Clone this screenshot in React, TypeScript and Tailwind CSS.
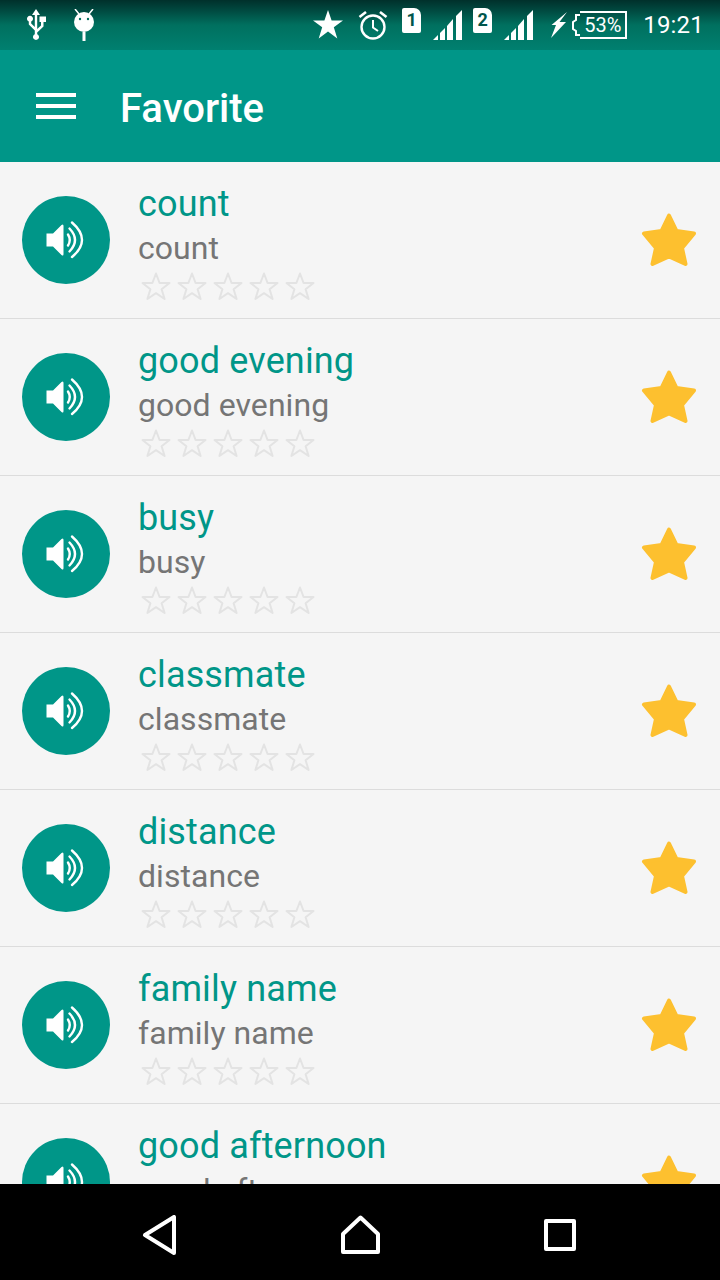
import React from "react";

const words = [
  "count",
  "good evening",
  "busy",
  "classmate",
  "distance",
  "family name",
  "good afternoon",
];

function Speaker() {
  return (
    <div className="flex items-center justify-center shrink-0 w-[88px] h-[88px] ml-[22px] rounded-full bg-[#009688]">
      <svg width="88" height="88" viewBox="0 0 88 88" fill="none">
        <path
          d="M24.5 37.5H31L39.5 29Q41.5 27.5 41.5 30V58Q41.5 60.5 39.5 59L31 50.5H24.5Z"
          fill="#fff"
        />
        <path d="M46 38.5Q49.5 44 46 49.5" stroke="#fff" strokeWidth="2.4" strokeLinecap="round" />
        <path d="M47.5 32.5Q58.5 44 47.5 55.5" stroke="#fff" strokeWidth="2.4" strokeLinecap="round" />
        <path d="M50 26.5Q70 44 50 61" stroke="#fff" strokeWidth="2.4" strokeLinecap="round" />
      </svg>
    </div>
  );
}

function SmallStar() {
  return (
    <svg width="36" height="30" viewBox="0 0 36 30" fill="none" className="shrink-0">
      <path
        d="M18 2.5L21.6 12H31.5L23.6 18.2L26.6 28L18 22.2L9.4 28L12.4 18.2L4.5 12H14.4Z"
        stroke="#e3e3e3"
        strokeWidth="2"
        strokeLinejoin="round"
      />
    </svg>
  );
}

function BigStar() {
  return (
    <svg width="56" height="54" viewBox="0 0 56 54" className="shrink-0 ml-auto mr-[23px]">
      <path
        d="M28 2.5L35.5 18L53 20.5L41 35L44.5 51L28 43.5L11.5 51L15 35L3 20.5L20.5 18Z"
        fill="#fdc02f"
        stroke="#fdc02f"
        strokeWidth="4"
        strokeLinejoin="round"
      />
    </svg>
  );
}

function Row({ word }: { word: string }) {
  return (
    <div className="flex items-center shrink-0 h-[157px] border-b border-[#dcdcdc]">
      <Speaker />
      <div className="flex flex-col ml-[28px] pt-[3px]">
        <p className="text-[36px] leading-[42px] tracking-[0.15px] text-[#009688]">{word}</p>
        <p className="text-[32px] leading-[38px] tracking-[0.05px] mt-[4px] text-[#757575]">{word}</p>
        <div className="flex mt-[4px]">
          <SmallStar />
          <SmallStar />
          <SmallStar />
          <SmallStar />
          <SmallStar />
        </div>
      </div>
      <BigStar />
    </div>
  );
}

function Signal({ className }: { className: string }) {
  return (
    <svg width="30" height="30" viewBox="0 0 30 30" fill="#fff" className={className}>
      <path d="M0 30L5 25V30Z" />
      <path d="M7 30V23L12 18V30Z" />
      <path d="M14 30V16L20 9V30Z" />
      <path d="M23 30V6L29 0V30Z" />
    </svg>
  );
}

function Sim({ label, className }: { label: string; className: string }) {
  return (
    <div
      className={`flex items-center justify-center w-[19px] h-[25px] rounded-tl-[2px] rounded-bl-[2px] rounded-br-[2px] rounded-tr-[7px] bg-white text-[#00564c] text-[18px] leading-none font-bold ${className}`}
    >
      {label}
    </div>
  );
}

function StatusBar() {
  return (
    <div className="flex items-center shrink-0 h-[50px] pb-[1px] bg-gradient-to-b from-[#00302b] via-[#00705f] to-[#008070] text-white">
      <svg width="20" height="31" viewBox="0 0 20 31" fill="#fff" className="ml-[26px]">
        <path d="M10 0L14 6H11.2V20L15 16.5V13H13.5V7.5H20V13H17.5V17.5L11.2 23.5V25.2A3 3 0 1 1 8.8 25.2V21.5L2.8 15.5V12.5A3 3 0 1 1 5.2 12.5V14.5L8.8 18V6H6Z" />
      </svg>
      <svg width="22" height="32" viewBox="0 0 22 32" fill="#fff" className="ml-[27px]">
        <circle cx="11" cy="13" r="10" />
        <path d="M2 0L6 5M20 0L16 5" stroke="#fff" strokeWidth="1.5" />
        <rect x="9.5" y="23" width="3" height="9" />
        <circle cx="7" cy="10" r="1.2" fill="#00705f" />
        <circle cx="15" cy="10" r="1.2" fill="#00705f" />
      </svg>
      <svg width="30" height="29" viewBox="0 0 30 29" fill="#fff" className="ml-auto">
        <path d="M15 0L18.6 10.5H30L20.8 17.2L24.3 28.5L15 21.5L5.7 28.5L9.2 17.2L0 10.5H11.4Z" />
      </svg>
      <svg width="30" height="30" viewBox="0 0 30 30" fill="none" stroke="#fff" className="ml-[15px]">
        <circle cx="15" cy="17" r="11.5" strokeWidth="2.4" />
        <path d="M15 10V17.5L20 21" strokeWidth="2" />
        <path d="M1.5 7L8 2M28.5 7L22 2" strokeWidth="2.6" />
      </svg>
      <Sim label="1" className="ml-[14px] -mt-[9px]" />
      <Signal className="ml-[12px]" />
      <Sim label="2" className="ml-[10px] -mt-[9px]" />
      <Signal className="ml-[12px]" />
      <svg width="16" height="26" viewBox="0 0 16 26" fill="#fff" className="ml-[17px]">
        <path d="M16 0L8.5 10H15L0 26L5 13H0.5Z" />
      </svg>
      <div className="flex items-center ml-[5px]">
        <svg width="8" height="22" viewBox="0 0 8 22" fill="none" stroke="#fff" strokeWidth="2">
          <path d="M8 1H4V6L1 8V15L4 17V21H8" />
        </svg>
        <div className="flex items-center justify-center w-[47px] h-[28px] border-2 border-l-0 border-white text-[20px] leading-none">
          53%
        </div>
      </div>
      <span className="ml-[16px] mr-[16px] text-[24px] leading-none tracking-[0.2px]">19:21</span>
    </div>
  );
}

function BottomNav() {
  return (
    <div className="flex justify-center items-center shrink-0 h-[96px] pt-[6px] bg-black">
      <div className="flex justify-center w-[200px]">
        <svg width="36" height="40" viewBox="0 0 36 40" fill="none" stroke="#fff" strokeWidth="4" strokeLinejoin="round">
          <path d="M3 20L32 2V38Z" />
        </svg>
      </div>
      <div className="flex justify-center w-[200px]">
        <svg width="40" height="40" viewBox="0 0 40 40" fill="none" stroke="#fff" strokeWidth="4" strokeLinejoin="round">
          <path d="M20.5 2.5L38 19V37H3V19Z" />
        </svg>
      </div>
      <div className="flex justify-center w-[200px]">
        <svg width="32" height="32" viewBox="0 0 32 32" fill="none" stroke="#fff" strokeWidth="4" strokeLinejoin="round">
          <rect x="2" y="2" width="28" height="28" />
        </svg>
      </div>
    </div>
  );
}

function App() {
  return (
    <div className="flex flex-col w-[720px] h-[1280px] overflow-hidden bg-[#f5f5f5] font-['Roboto',sans-serif]">
      <StatusBar />
      <div className="flex items-center shrink-0 h-[112px] bg-[#009688]">
        <div className="flex flex-col gap-[7px] ml-[36px]">
          <span className="block w-[40px] h-[4px] bg-white" />
          <span className="block w-[40px] h-[4px] bg-white" />
          <span className="block w-[40px] h-[4px] bg-white" />
        </div>
        <h1 className="ml-[44px] mt-[6px] text-[40px] leading-[48px] font-medium text-white">Favorite</h1>
      </div>
      <div className="flex flex-col flex-1 min-h-0 overflow-hidden">
        {words.map((w) => (
          <Row key={w} word={w} />
        ))}
      </div>
      <BottomNav />
    </div>
  );
}

export default App;
